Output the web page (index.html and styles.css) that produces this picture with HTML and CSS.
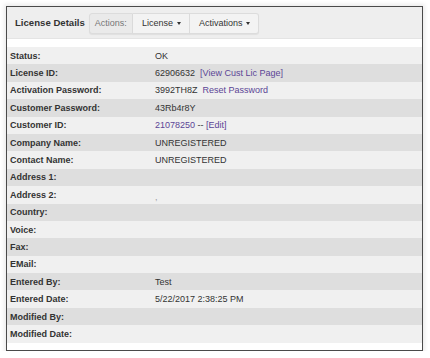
FILE: index.html
```html
<!DOCTYPE html>
<html>
<head>
<meta charset="utf-8">
<link rel="stylesheet" href="styles.css">
</head>
<body>
<div class="panel">
  <div class="head">
    <span class="title">License Details</span>
    <div class="btns">
      <span class="btn lbl">Actions:</span>
      <span class="btn">License <i class="caret"></i></span>
      <span class="btn">Activations <i class="caret"></i></span>
    </div>
  </div>
  <div class="gap"></div>
  <div class="rows">
    <div class="row"><span class="k">Status:</span><span class="v">OK</span></div>
    <div class="row"><span class="k">License ID:</span><span class="v">62906632&nbsp; <a>[View Cust Lic Page]</a></span></div>
    <div class="row"><span class="k">Activation Password:</span><span class="v">3992TH8Z&nbsp; <a>Reset Password</a></span></div>
    <div class="row"><span class="k">Customer Password:</span><span class="v">43Rb4r8Y</span></div>
    <div class="row"><span class="k">Customer ID:</span><span class="v"><a>21078250</a> -- <a>[Edit]</a></span></div>
    <div class="row"><span class="k">Company Name:</span><span class="v">UNREGISTERED</span></div>
    <div class="row"><span class="k">Contact Name:</span><span class="v">UNREGISTERED</span></div>
    <div class="row"><span class="k">Address 1:</span><span class="v"></span></div>
    <div class="row"><span class="k">Address 2:</span><span class="v dot">,</span></div>
    <div class="row"><span class="k">Country:</span><span class="v"></span></div>
    <div class="row"><span class="k">Voice:</span><span class="v"></span></div>
    <div class="row"><span class="k">Fax:</span><span class="v"></span></div>
    <div class="row"><span class="k">EMail:</span><span class="v"></span></div>
    <div class="row"><span class="k">Entered By:</span><span class="v">Test</span></div>
    <div class="row"><span class="k">Entered Date:</span><span class="v">5/22/2017 2:38:25 PM</span></div>
    <div class="row"><span class="k">Modified By:</span><span class="v"></span></div>
    <div class="row"><span class="k">Modified Date:</span><span class="v"></span></div>
  </div>
</div>
</body>
</html>
```
FILE: styles.css
```css
html, body { margin: 0; padding: 0; background: #fff; }
body {
  font-family: "Liberation Sans", Arial, sans-serif;
  font-size: 9px;
  color: #333;
  padding: 6px 7px 0 6px;
}
.panel {
  width: 415px;
  height: 343px;
  border: 1px solid #4a4a4a;
  box-shadow: 0 0 4px 2px rgba(0,0,0,0.08);
  background: #fff;
  display: flex;
  flex-direction: column;
}
.head {
  height: 32px;
  background: #eeeeee;
  border-bottom: 1px solid #e4e4e4;
  display: flex;
  align-items: center;
  padding-left: 8px;
  box-sizing: border-box;
}
.title {
  font-weight: bold;
  font-size: 9.6px;
  color: #333;
  margin-right: 4px;
}
.btns {
  display: flex;
  height: 21px;
  margin-top: 1px;
}
.btn {
  display: flex;
  align-items: center;
  padding: 0 8px 0 9px;
  background: #f3f3f3;
  border: 1px solid #dcdcdc;
  border-left: none;
  box-shadow: 0 1px 1px rgba(0,0,0,0.06);
  font-size: 9px;
  color: #333;
}
.btn.lbl { border-left: 1px solid #dcdcdc; color: #777; padding: 0 5px 0 5px; border-radius: 3px 0 0 3px; background:#eaeaea; }
.btn:last-child { border-radius: 0 3px 3px 0; }
.caret {
  display: inline-block;
  width: 0; height: 0;
  border-left: 2.5px solid transparent;
  border-right: 2.5px solid transparent;
  border-top: 3px solid #333;
  margin-left: 4px;
  margin-top: 1px;
}
.gap { height: 8px; }
.rows { display: flex; flex-direction: column; }
.row {
  height: 17.4px;
  display: flex;
  align-items: center;
  background: #f0f0f0;
}
.row:nth-child(even) { background: #dedede; }
.k {
  width: 145px;
  padding-left: 3px;
  font-weight: bold;
  color: #333;
}
.v { color: #333; }
.v a { color: #5b4596; }
.dot { color: #999; position: relative; top: 2px; }
```
